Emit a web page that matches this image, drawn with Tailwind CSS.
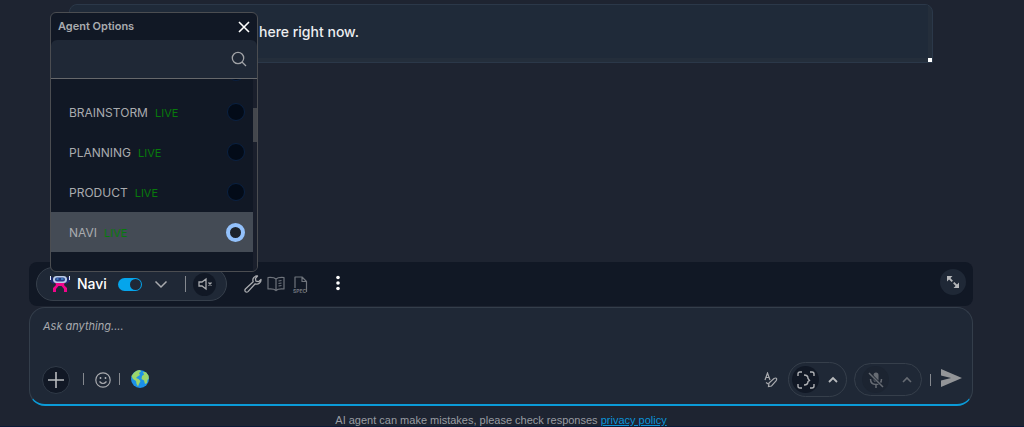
<!DOCTYPE html>
<html lang="en">
<head>
    <meta charset="UTF-8">
    <meta name="viewport" content="width=device-width, initial-scale=1.0">
    <title>Navi</title>
    <script src="https://cdn.jsdelivr.net/npm/@tailwindcss/browser@4"></script>
</head>
<body class="bg-[#1e2431] font-['Inter',sans-serif] text-[#a9abaf]">
    <div class="min-h-screen flex flex-col border-b border-[#0a1a38]">
        <!-- Conversation -->
        <main class="flex-1 pt-1 pl-[69px] pr-[91px]">
            <div class="h-[59px] flex items-stretch rounded-t-lg border border-[#2b3849] bg-[#242e3b] pb-1">
                <p class="flex-1 rounded-tl-lg bg-[#1f2a39] pl-[189px] pt-4 text-sm leading-[22px] font-medium text-[#eceef0]">here right now.</p>
                <div class="w-1 flex items-end"><span class="w-1 h-1 -mb-1 bg-white"></span></div>
            </div>
        </main>

        <div class="pl-[29px] pr-[51px]">
            <!-- Toolbar -->
            <div class="relative h-11 mb-px flex items-center rounded-lg bg-[#111825] pl-[7px] pr-[7px]">
                <div class="h-[34px] w-[191px] flex items-center rounded-full border border-[#363f4b] bg-[#1f2836] pl-[13px] pr-2">
                    <svg class="w-5 h-[18px]" viewBox="0 0 20 18">
                        <path d="M1.500 2v4l3 2M18.500 2v4l-3 2" fill="none" stroke="#1d2a70" stroke-width="2.500"/>
                        <path d="M0 1h1v4H0zM19 1h1v4h-1z" fill="#dfe6f5"/>
                        <path d="M5 7h10l-1 3 3 3v4h-3v-3l-2.500-3h-3L6 14v3H3v-4l3-3z" fill="#f0058c"/>
                        <rect x="3" y="1" width="14" height="7" rx="3.500" fill="#b9cbe8"/>
                        <rect x="5" y="2.500" width="10" height="4" rx="2" fill="#263c86"/>
                        <path d="M6.500 4h2M11 4h2.500" stroke="#58b6ed"/>
                    </svg>
                    <span class="ml-[7px] w-[41px] text-sm font-medium text-white">Navi</span>
                    <label class="relative flex">
                        <input type="checkbox" checked aria-label="Enable Navi" class="peer appearance-none w-6 h-[13px] rounded-full bg-[#374151] checked:bg-[#05a5ec]">
                        <span class="absolute top-px left-px peer-checked:left-3 w-[11px] h-[11px] rounded-full bg-[#1f2836]"></span>
                    </label>
                    <button aria-label="Choose agent" class="ml-3">
                        <svg class="w-[14px] h-[14px]" viewBox="0 0 14 14" fill="none" stroke="#a9abaf" stroke-width="1.500"><path d="M1.500 4.500 7 10l5.500-5.500"/></svg>
                    </button>
                    <span class="ml-[17px] w-px h-4 bg-[#85898f]"></span>
                    <button aria-label="Unmute" class="ml-[7px] w-[23px] h-[23px] flex items-center justify-center rounded-full bg-[#111825]">
                        <svg class="w-[14px] h-[14px]" viewBox="0 0 14 14" fill="none" stroke="#a9abaf" stroke-width="1.300"><path d="M1 5h3l4-3v10L4 9H1zM10.500 5.500l3 3M13.500 5.500l-3 3"/></svg>
                    </button>
                </div>
                <button aria-label="Tools" class="ml-[17px]">
                    <svg class="w-[18px] h-[18px]" viewBox="0 0 18 18" fill="none" stroke="#a9abaf" stroke-width="1.300" stroke-linejoin="round"><path d="M13.500 1a4.200 4.200 0 0 0-4.300 5.800L1.400 14a1.800 1.800 0 0 0 2.600 2.600l7.200-7.800A4.200 4.200 0 0 0 17 4.500l-2.400 2.200-2.700-.5-.5-2.700z"/><path d="M3.500 14.500h.1"/></svg>
                </button>
                <button aria-label="Knowledge" class="ml-[5px]">
                    <svg class="w-[18px] h-[16px]" viewBox="0 0 18 16" fill="none" stroke="#6f747c" stroke-width="1.200" stroke-linejoin="round"><path d="M9 3Q7 1 1 1.500V13q6-.5 8 1.500 2-2 8-1.500V1.500Q11 1 9 3zM9 3v11.500M11.500 5l3-.5M11.500 7.500l3-.5M11.500 10l3-.5"/></svg>
                </button>
                <button aria-label="Spec" class="ml-2">
                    <svg class="w-[15px] h-[17px]" viewBox="0 0 15 17" fill="none" stroke="#6f747c" stroke-width="1.200" stroke-linejoin="round"><path d="M2 12V1h7l4.500 4.500V16M9 1v4.500h4.500"/><text x="0" y="16.500" font-size="5" stroke="none" fill="#6f747c" font-weight="bold">SPEC</text></svg>
                </button>
                <button aria-label="More" class="ml-[28px] mb-0.5">
                    <svg class="w-1 h-4" viewBox="0 0 4 16" fill="#fff"><circle cx="2" cy="2.500" r="1.800"/><circle cx="2" cy="8" r="1.800"/><circle cx="2" cy="13.500" r="1.800"/></svg>
                </button>
                <button aria-label="Expand" class="ml-auto mb-1 w-[26px] h-[26px] flex items-center justify-center rounded-full bg-[#1f2836]">
                    <svg class="w-[14px] h-[14px]" viewBox="0 0 14 14" fill="#b5b7ba"><path d="M1 1h5.500L1 6.500zM13 13H7.500L13 7.500z"/><path d="m3 3 3.300 3.300M7.700 7.700 11 11" stroke="#b5b7ba" stroke-width="1.800"/></svg>
                </button>

                <!-- Agent picker -->
                <section class="absolute left-[21px] bottom-[34px] w-[208px] overflow-hidden rounded-md border border-[#4b4d51] bg-[#111825]">
                    <header class="h-[27px] flex items-center justify-between pl-[7px] pr-[7px]">
                        <h2 class="text-[11px] font-semibold">Agent Options</h2>
                        <button aria-label="Close">
                            <svg class="w-3 h-3" viewBox="0 0 12 12" stroke="#fff" stroke-width="1.600"><path d="m1 1 10 10M11 1 1 11"/></svg>
                        </button>
                    </header>
                    <div class="h-[39px] flex items-center rounded-t-md border-b border-[#66686b] bg-[#1f2836] pr-[10px]">
                        <input type="text" aria-label="Search agents" class="flex-1 min-w-0 h-full px-2 text-sm outline-none">
                        <svg class="w-4 h-4" viewBox="0 0 16 16" fill="none" stroke="#a0a2a6" stroke-width="1.300"><circle cx="7" cy="7" r="5.700"/><path d="m11 11 4 4"/></svg>
                    </div>
                    <div class="flex h-[192px]">
                        <div class="flex-1 flex flex-col justify-end overflow-hidden pb-[19px] text-xs">
                            <label class="h-10 shrink-0 flex items-center pl-[18px] pr-2">
                                <input type="radio" name="agent" aria-label="Agent" class="ml-auto appearance-none w-[18px] h-[18px] rounded-full border border-[#0a2142] bg-[#030b18]">
                            </label>
                            <label class="h-10 shrink-0 flex items-center pl-[18px] pr-2">
                                <span class="pt-0.5">BRAINSTORM</span>
                                <span class="ml-[7px] pt-0.5 text-[11px] text-[#087a0c]">LIVE</span>
                                <input type="radio" name="agent" class="ml-auto appearance-none w-[18px] h-[18px] rounded-full border border-[#0a2142] bg-[#030b18]">
                            </label>
                            <label class="h-10 shrink-0 flex items-center pl-[18px] pr-2">
                                <span class="pt-0.5">PLANNING</span>
                                <span class="ml-[7px] pt-0.5 text-[11px] text-[#087a0c]">LIVE</span>
                                <input type="radio" name="agent" class="ml-auto appearance-none w-[18px] h-[18px] rounded-full border border-[#0a2142] bg-[#030b18]">
                            </label>
                            <label class="h-10 shrink-0 flex items-center pl-[18px] pr-2">
                                <span class="pt-0.5">PRODUCT</span>
                                <span class="ml-[7px] pt-0.5 text-[11px] text-[#087a0c]">LIVE</span>
                                <input type="radio" name="agent" class="ml-auto appearance-none w-[18px] h-[18px] rounded-full border border-[#0a2142] bg-[#030b18]">
                            </label>
                            <label class="h-10 shrink-0 flex items-center bg-[#444b55] pl-[18px] pr-2">
                                <span class="pt-0.5">NAVI</span>
                                <span class="ml-[7px] pt-0.5 text-[11px] text-[#087a0c]">LIVE</span>
                                <input type="radio" name="agent" checked class="ml-auto appearance-none w-[19px] h-[19px] rounded-full border-4 border-[#93c1fb] bg-[#1d232b]">
                            </label>
                        </div>
                        <div class="w-1 bg-[#1a1f2c] pt-[29px]"><div class="h-[34px] bg-[#44474d]"></div></div>
                    </div>
                </section>
            </div>

            <!-- Composer -->
            <form class="h-[99px] flex flex-col justify-between rounded-2xl border border-b-2 border-[#343e4b] border-b-[#0b9bd8] bg-[#1f2836] pl-3 pr-[10px] pt-2 pb-[7px]">
                <textarea aria-label="Message" rows="1" placeholder="Ask anything...." class="w-full h-5 resize-none outline-none pl-px text-[11px] leading-5 italic placeholder:text-[#a9abaf]"></textarea>
                <div class="h-[35px] flex items-center">
                    <button type="button" aria-label="Add" class="w-7 h-7 flex items-center justify-center rounded-full border border-[#303a47] bg-[#111825]">
                        <svg class="w-4 h-4" viewBox="0 0 16 16" stroke="#b8babd" stroke-width="1.600"><path d="M8 0v16M0 8h16"/></svg>
                    </button>
                    <span class="ml-[13px] mb-0.5 w-px h-3 bg-[#85898f]"></span>
                    <button type="button" aria-label="Emoji" class="ml-[11px]">
                        <svg class="w-4 h-4" viewBox="0 0 16 16" fill="none" stroke="#a9abaf" stroke-width="1.200"><circle cx="8" cy="8" r="7.200"/><path d="M4.500 9.500q3.500 4 7 0"/><path d="M5.500 5v2M10.500 5v2" stroke-width="1.500"/></svg>
                    </button>
                    <span class="ml-2 mb-0.5 w-px h-3 bg-[#85898f]"></span>
                    <button type="button" aria-label="Web search" class="ml-[11px] mb-0.5">
                        <svg class="w-[18px] h-[18px]" viewBox="0 0 18 18"><circle cx="9" cy="9" r="9" fill="#1c91e8"/><path d="M2 4Q5 0 9 0l1 1.500L8 3l1 2-2.500 1.500L5 8l2.500 1 2 2L8 14l-1 2.500L5.500 14 5 11 2 9 .5 6zM12 2l3 .3 2.500 3.200.3 3-1.300 1.500L16 13l-2 1-1-3.500L10.500 9l.5-3 2-1.500z" fill="#9bd56b"/></svg>
                    </button>
                    <button type="button" aria-label="Check writing" class="ml-auto">
                        <svg class="w-[14px] h-4" viewBox="0 0 14 16" fill="none" stroke="#a9abaf" stroke-width="1.200"><path d="M1 8 3.500 1 6 8M2 5.500h3M2 10.500l3 2M4.500 14.500 5 11l5-4.500q2-1 2.500 0t-.5 2.500L7.500 14z"/></svg>
                    </button>
                    <div class="ml-[10px] w-[59px] h-[35px] flex items-center rounded-full border border-[#363f4b] pl-[3px]">
                        <button type="button" aria-label="Scan" class="w-[27px] h-[27px] flex items-center justify-center rounded-full bg-[#111825]">
                            <svg class="w-[18px] h-[18px]" viewBox="0 0 18 18" fill="none" stroke="#b0b2b6" stroke-width="1.400"><path d="M1 5V3q0-2 2-2h2M13 1h2q2 0 2 2v2M17 13v2q0 2-2 2h-2M5 17H3q-2 0-2-2v-2M7 4q4 0 4 3.500l1.500 2-1.500 1q0 3.500-4 3.500"/></svg>
                        </button>
                        <button type="button" aria-label="Scan options" class="ml-[9px]">
                            <svg class="w-[10px] h-[10px]" viewBox="0 0 10 10" fill="none" stroke="#b8babd" stroke-width="1.800"><path d="m1 7 4-4 4 4"/></svg>
                        </button>
                    </div>
                    <div class="ml-[7px] w-[68px] h-[33px] flex items-center rounded-full border border-[#363f4b] pl-[7px]">
                        <button type="button" aria-label="Microphone" class="w-[27px] h-[27px] flex items-center justify-center rounded-full bg-[#1c2431]">
                            <svg class="w-4 h-[18px]" viewBox="0 0 16 18" fill="none" stroke="#666b73" stroke-width="1.500"><path d="M5.500 4a2.500 2.500 0 0 1 5 0v4.500a2.500 2.500 0 0 1-5 0z" fill="#666b73" stroke="none"/><path d="M2.500 8q0 5.500 5.500 5.500T13.500 8M8 13.500V17"/><path d="m1 2 14 14" stroke="#1c2431" stroke-width="3"/><path d="m1 2 14 14"/></svg>
                        </button>
                        <button type="button" aria-label="Microphone options" class="ml-[13px]">
                            <svg class="w-[10px] h-[10px]" viewBox="0 0 10 10" fill="none" stroke="#666b73" stroke-width="1.600"><path d="m1 7 4-4 4 4"/></svg>
                        </button>
                    </div>
                    <span class="ml-2 w-px h-3 bg-[#85898f]"></span>
                    <button type="submit" aria-label="Send" class="ml-[10px] mb-1">
                        <svg class="w-[21px] h-[18px]" viewBox="0 0 21 18" fill="#939598"><path d="M0 0 21 9 0 18v-6.500L10 9 0 6.500z"/></svg>
                    </button>
                </div>
            </form>

            <p class="mt-[6px] h-[14px] text-center font-['Liberation_Sans',sans-serif] text-[11px] leading-4 text-[#999ca2]">AI agent can make mistakes, please check responses <a href="#" class="text-[#0b93d8] underline">privacy policy</a></p>
        </div>
    </div>
</body>
</html>
